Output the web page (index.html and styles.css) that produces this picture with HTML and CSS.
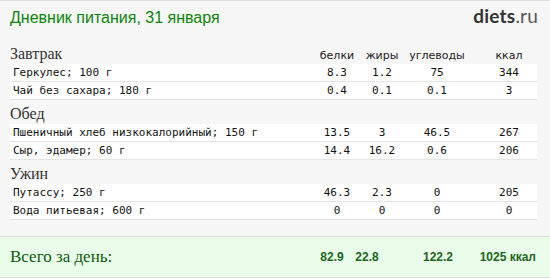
FILE: index.html
```html
<!DOCTYPE html>
<html lang="ru">
<head>
<meta charset="utf-8">
<title>Дневник питания</title>
<link rel="stylesheet" href="styles.css">
</head>
<body>
<div class="page">
  <header class="top">
    <h1 class="title">Дневник питания, 31 января</h1>
    <div class="logo"><span class="logo-main">diets</span><span class="logo-tld">.ru</span></div>
  </header>

  <section class="diary">
    <div class="meal-head">
      <span class="meal-name">Завтрак</span>
      <span class="col">белки</span>
      <span class="col">жиры</span>
      <span class="col">углеводы</span>
      <span class="col col-kcal">ккал</span>
    </div>
    <div class="row">
      <span class="name">Геркулес; 100 г</span>
      <span class="col">8.3</span><span class="col">1.2</span><span class="col">75</span><span class="col col-kcal">344</span>
    </div>
    <div class="row">
      <span class="name">Чай без сахара; 180 г</span>
      <span class="col">0.4</span><span class="col">0.1</span><span class="col">0.1</span><span class="col col-kcal">3</span>
    </div>

    <div class="meal-head">
      <span class="meal-name">Обед</span>
    </div>
    <div class="row">
      <span class="name">Пшеничный хлеб низкокалорийный; 150 г</span>
      <span class="col">13.5</span><span class="col">3</span><span class="col">46.5</span><span class="col col-kcal">267</span>
    </div>
    <div class="row">
      <span class="name">Сыр, эдамер; 60 г</span>
      <span class="col">14.4</span><span class="col">16.2</span><span class="col">0.6</span><span class="col col-kcal">206</span>
    </div>

    <div class="meal-head">
      <span class="meal-name">Ужин</span>
    </div>
    <div class="row">
      <span class="name">Путассу; 250 г</span>
      <span class="col">46.3</span><span class="col">2.3</span><span class="col">0</span><span class="col col-kcal">205</span>
    </div>
    <div class="row">
      <span class="name">Вода питьевая; 600 г</span>
      <span class="col">0</span><span class="col">0</span><span class="col">0</span><span class="col col-kcal">0</span>
    </div>
  </section>

  <footer class="total">
    <span class="total-label">Всего за день:</span>
    <span class="tcol">82.9</span>
    <span class="tcol">22.8</span>
    <span class="tcol tcol-carb">122.2</span>
    <span class="tcol tcol-kcal">1025 ккал</span>
  </footer>
</div>
</body>
</html>
```

FILE: styles.css
```css
html, body {
  margin: 0;
  padding: 0;
}

body {
  background: #f7f7f7;
}

.page {
  width: 550px;
  height: 278px;
  box-sizing: border-box;
  background: #f7f7f7;
  border-top: 1px solid #e2e2e2;
  display: flex;
  flex-direction: column;
}

.top {
  display: flex;
  justify-content: space-between;
  align-items: baseline;
  height: 39px;
  box-sizing: border-box;
  padding: 5px 12px 0 10px;
}

.title {
  margin: 0;
  font-family: "Liberation Sans", Arial, sans-serif;
  font-weight: normal;
  font-size: 16px;
  line-height: 20px;
  color: #0b850b;
}

.logo {
  font-family: Lato, "Open Sans", sans-serif;
  font-size: 19px;
  line-height: 20px;
  letter-spacing: 0.2px;
}

.logo-main {
  font-weight: bold;
  color: #333333;
}

.logo-tld {
  color: #555555;
}

.diary {
  padding: 0 13px 0 10px;
}

.meal-head,
.row {
  display: grid;
  grid-template-columns: 1fr 50px 40px 70px 65px;
  align-items: baseline;
}

.meal-head {
  height: 24px;
  box-sizing: border-box;
  padding-top: 4px;
  line-height: 20px;
}

.meal-name {
  font-family: "Liberation Serif", "Times New Roman", serif;
  font-size: 16px;
  color: #333333;
}

.meal-head .col {
  font-family: "DejaVu Sans", Verdana, sans-serif;
  font-size: 11px;
  color: #222222;
}

.col {
  text-align: center;
}

.col-kcal {
  padding-left: 9px;
}

.row {
  height: 18px;
  box-sizing: border-box;
  background: #ffffff;
  border-bottom: 1px solid #e4e4e4;
  line-height: 17px;
  font-family: "DejaVu Sans Mono", "Courier New", monospace;
  font-size: 11px;
  color: #111111;
}

.name {
  padding-left: 3px;
}

.total {
  margin-top: auto;
  height: 42px;
  box-sizing: border-box;
  background: #eafdea;
  border-top: 1px solid #dcdcdc;
  border-bottom: 1px solid #dcdcdc;
  display: grid;
  grid-template-columns: 1fr 40px 30px 86px 68px;
  align-items: center;
  padding: 0 14px 0 10px;
}

.total-label {
  font-family: "Liberation Serif", "Times New Roman", serif;
  font-size: 17px;
  color: #0b5a0b;
}

.tcol {
  font-family: "Liberation Sans", Arial, sans-serif;
  font-weight: bold;
  font-size: 12px;
  color: #1d661d;
  text-align: center;
}

.tcol-carb {
  padding-left: 26px;
}

.tcol-kcal {
  text-align: right;
}
```
